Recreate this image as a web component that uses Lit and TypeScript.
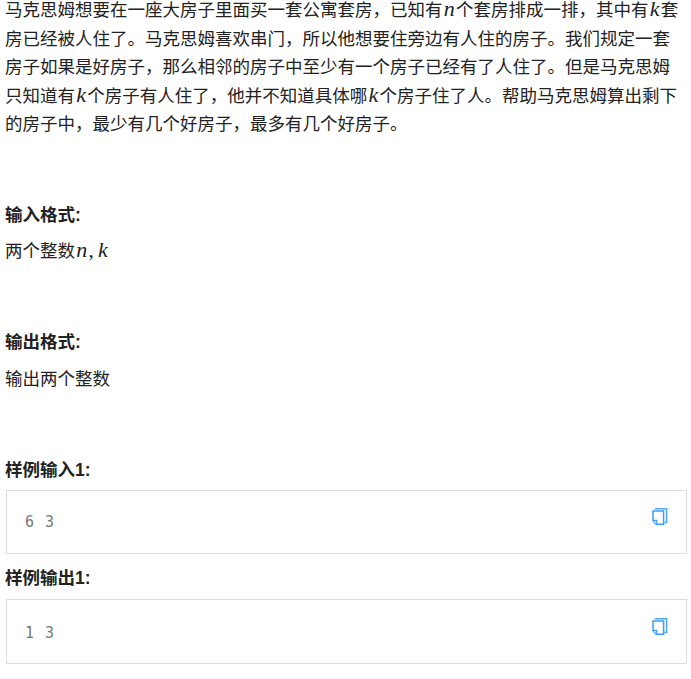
import { LitElement, html, css } from "lit";
import { customElement } from "lit/decorators.js";

const copyIcon = html`<svg class="copy" viewBox="0 0 16 18" width="16" height="18" aria-hidden="true">
  <path d="M3.5 1.5V0.8H14.6V14.6H12.4" fill="none" stroke="#4fa6f8" stroke-width="1.5"/>
  <path d="M1 3H11.6V16.2H4.4L1 12.8Z" fill="#fff" stroke="#3d9cf5" stroke-width="1.5" stroke-linejoin="miter"/>
  <path d="M1 12.4H4.8V16.2" fill="#cfe6fc" stroke="#3d9cf5" stroke-width="1.2"/>
</svg>`;

@customElement("app-root")
export class AppRoot extends LitElement {
  static styles = css`
    :host {
      display: block;
      background: #fff;
      color: #222;
      font-family: "Liberation Sans", "Noto Sans CJK SC", sans-serif;
      font-size: 17.5px;
      line-height: 28.5px;
      padding: 0 4px 15px 5px;
      height: 679px;
      box-sizing: border-box;
      overflow: hidden;
    }
    p {
      margin: 0;
    }
    .intro {
      margin-top: -4px;
    }
    i {
      font-family: "Liberation Serif", serif;
      font-size: 22px;
      line-height: 0;
      font-style: italic;
      padding: 0 1.25px;
    }
    .comma {
      font-family: "Liberation Serif", serif;
      font-size: 21px;
      line-height: 0;
      padding-right: 3px;
    }
    h4 {
      margin: 0;
      font-size: 17.5px;
      font-weight: 700;
      line-height: 28px;
    }
    .h-input {
      margin-top: 62px;
    }
    .b-input {
      margin-top: 8px;
    }
    .h-output {
      margin-top: 63px;
    }
    .b-output {
      margin-top: 9px;
    }
    .h-sample {
      margin-top: 62px;
    }
    .h-sample2 {
      margin-top: 10px;
    }
    .box {
      margin: 6px 0 0 1px;
      height: 64px;
      box-sizing: border-box;
      border: 1px solid #ddd;
      padding: 18px 18px;
      display: flex;
      justify-content: space-between;
      align-items: flex-start;
    }
    .box.tall {
      margin-top: 7px;
      height: 65px;
      padding-top: 20px;
    }
    .box.tall .copy {
      margin-top: -2px;
    }
    code {
      font-family: "DejaVu Sans Mono", monospace;
      font-size: 15px;
      line-height: 26px;
      letter-spacing: 1px;
      color: #777;
    }
    .copy {
      display: block;
      margin: -1px 0 0 0;
    }
  `;

  render() {
    return html`
      <p class="intro">马克思姆想要在一座大房子里面买一套公寓套房，已知有<i>n</i>个套房排成一排，其中有<i>k</i>套房已经被人住了。马克思姆喜欢串门，所以他想要住旁边有人住的房子。我们规定一套房子如果是好房子，那么相邻的房子中至少有一个房子已经有了人住了。但是马克思姆只知道有<i>k</i>个房子有人住了，他并不知道具体哪<i>k</i>个房子住了人。帮助马克思姆算出剩下的房子中，最少有几个好房子，最多有几个好房子。</p>
      <h4 class="h-input">输入格式:</h4>
      <p class="b-input">两个整数<i>n</i><span class="comma">,</span><i>k</i></p>
      <h4 class="h-output">输出格式:</h4>
      <p class="b-output">输出两个整数</p>
      <h4 class="h-sample">样例输入1:</h4>
      <div class="box"><code>6 3</code>${copyIcon}</div>
      <h4 class="h-sample2">样例输出1:</h4>
      <div class="box tall"><code>1 3</code>${copyIcon}</div>
    `;
  }
}
